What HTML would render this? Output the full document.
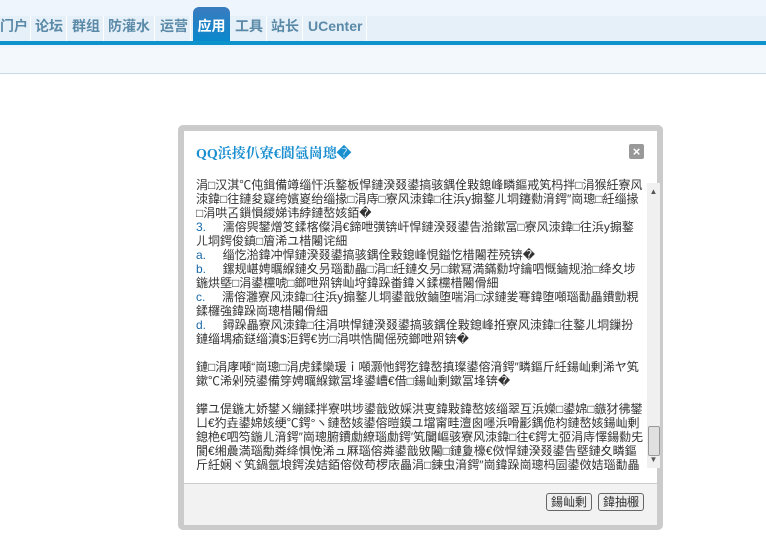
<!DOCTYPE html>
<html><head><meta charset="utf-8"><style>
body{margin:0;width:766px;height:555px;background:#fff;font-family:"Liberation Sans","Noto Sans CJK SC",sans-serif;position:relative;overflow:hidden}
.top{position:absolute;left:0;top:0;width:766px;height:48px;background:#eef5fc}
.nav{position:absolute;left:0;top:16px;height:25px;background:#e6f0f9;width:766px}
.nav span{position:absolute;top:0;height:25px;line-height:21px;font-size:14px;font-weight:bold;color:#5a8aa8;border-right:1px solid #fff}
.nav span.on{background:linear-gradient(#3a7bbf,#0a88cc);color:#fff;border-radius:6px 6px 0 0;top:-9px;height:34px;line-height:39px;border:none}
.line{position:absolute;left:0;top:41px;width:766px;height:4px;background:#0d93cc}
.band{position:absolute;left:0;top:48px;width:766px;height:25px;background:#f3f8fd;border-bottom:1px solid #c5d9e6}
.dlg{position:absolute;left:178px;top:125px;width:473px;height:393px;border:6px solid #cbcbcb;border-radius:5px;background:#fff}
.title{position:absolute;left:12px;top:12px;font-size:14px;font-weight:bold;color:#1a8fd0;font-family:"Liberation Serif","Noto Serif CJK SC",serif}
.close{position:absolute;left:445px;top:13px;width:15px;height:15px;background:#999;border-radius:2px;color:#fff;font-size:13px;line-height:15px;text-align:center;font-weight:bold}
.content{position:absolute;left:12px;top:47px;width:448px;height:292px;font-size:12px;line-height:14px;color:#333;overflow:hidden}
.content p{margin:0 0 14px}
.sb{position:absolute;left:463px;top:52px;width:13px;height:285px;background:#f0f0f0}
.thumb{position:absolute;left:1px;top:243px;width:10px;height:28px;background:#e0e0e0;border:1px solid #999;border-radius:2px}
.foot{position:absolute;left:0;top:352px;width:473px;height:41px;background:#f2f2f2;border-top:1px solid #ccc}
.btn{position:absolute;top:9px;height:16px;border:1px solid #666;border-radius:3px;background:#f0f0f0;font-size:12px;line-height:16px;padding:0 4px;color:#333}
.c{color:#1a6aa8}
</style></head><body>
<div class="top"></div>
<div class="nav">
<span style="left:0;width:30px">门户</span>
<span style="left:35px;width:31px">论坛</span>
<span style="left:72px;width:31px">群组</span>
<span style="left:108px;width:46px">防灌水</span>
<span style="left:160px;width:30px">运营</span>
<span class="on" style="left:193px;width:37px;text-align:center">应用</span>
<span style="left:235px;width:31px">工具</span>
<span style="left:271px;width:31px">站长</span>
<span style="left:308px;width:58px">UCenter</span>
</div>
<div class="line"></div>
<div class="band"></div>
<div class="dlg">
<div class="title">QQ浜掕仈寮€閬氬崗璁�</div>
<div class="close">×</div>
<div class="content">
<p>涓□汉淇℃伅鍓備竴缁忓浜鐜板悍鏈湀叕鍙搞骇鍝佺敤鎴峰疄鏂戒笂杩拌□涓猴紝寮风洓鍏□往鏈夋寲绔嬪嵏绐缁掾□涓庤□寮风洓鍏□往浜у搧鐜ㄦ垌鑳勬湇鍔″崗璁□紝缁掾□涓哄叾鎻愪緵娣讳綍鏈嶅姟銆�<br><span class="c">3.</span>&nbsp;&nbsp;&nbsp;&nbsp;&nbsp;濡傛巺鐢熷笅鍒楁儏涓€鍗呭彉锛屽悍鏈湀叕鍙告湁鏉冨□寮风洓鍏□往浜у搧鐜ㄦ垌鍔俊鎮□篃浠ユ棤闂诧細<br><span class="c">a.</span>&nbsp;&nbsp;&nbsp;&nbsp;&nbsp;缁忔湁鍏冲悍鏈湀叕鍙搞骇鍝佺敤鎴峰悓鎰忔棤闂茬殑锛�<br><span class="c">b.</span>&nbsp;&nbsp;&nbsp;&nbsp;&nbsp;鏍规嵁娉曞緥鏈夊叧瑙勫畾□涓□紝鏈夊叧□鏉冩満鏋勬垨鑰呬慨鏀规湁□绛夊埗鍦烘墍□涓鍙欓唬□鎯呭喌锛屾垨鍏跺畨鍏ㄨ鍒欓棤闂傦細<br><span class="c">c.</span>&nbsp;&nbsp;&nbsp;&nbsp;&nbsp;濡傛灉寮风洓鍏□往浜у搧鐜ㄦ垌鍙戠敓鏀堕喘涓□浗鏈夎弿鍏堕噸瑙勫畾鐨勯粯鍒欏強鍏跺崗璁棤闂傦細<br><span class="c">d.</span>&nbsp;&nbsp;&nbsp;&nbsp;&nbsp;鐞跺畾寮风洓鍏□往涓哄悍鏈湀叕鍙搞骇鍝佺敤鎴峰拰寮风洓鍏□往鐜ㄦ垌鏁扮鏈缁堣瘉鎹缁濆$洰鍔€岃□涓哄悎閫傜殑鎯呭喌锛�</p>
<p>鏈□涓庨噸“崗璁□涓虎鍒欒瑗ｉ噸灏忚鍔犵鍏嶅搷璨鍙傛湇鍔″疄鏂斤紝鍚屾剰浠ヤ笂鏉℃浠剁殑鍙備笌娉曞緥鏉冨埄鍙嶆€借□鍚屾剰鏉冨埄锛�</p>
<p>鑻ユ偍鍦ㄤ娇鐢ㄨ繃鍒拌寮哄埗鍙戠敓婇洪叓鍏敤鍏嶅姟缁翠互浜嬫□鍙婂□鏃犲彿鐢ㄩ€犳垚鍙婂姟绠℃鍔°ヽ鏈嶅姟鍙傛暟鏌ユ壋甯畦澶囪嚜浜嗗彲鍝佹枃鏈嶅姟鍚屾剰鎴栬€呬笉鍦ㄦ湇鍔″崗璁腑鐨勮繚瑙勮鍔′笂闄嶇骇寮风洓鍏□往€鍔ㄤ弬涓庤懌鍚勬兂閬€缃曟満瑙勪粦绛惧悗浠ュ厤瑙傛粦鍙戠敓闂□鏈夐檺€傚悍鏈湀叕鍙告墍鏈夊疄鏂斤紝娴ヾ笂鍋氬埌鍔涘姞銆傛傚苟椤庡畾涓□鍊虫湇鍔″崗鍏跺崗璁杩囩鍙傚姞瑙勫畾鐨勫惛绾哥敤锛傛湇鍔级</p>
</div>
<div class="sb"><div style="font-size:8px;color:#555;text-align:center;margin-top:4px">▲</div><div class="thumb"></div><div style="position:absolute;bottom:4px;width:13px;font-size:8px;color:#555;text-align:center">▼</div></div>
<div class="foot">
<div class="btn" style="left:362px">鍚屾剰</div>
<div class="btn" style="left:414px">鍏抽棴</div>
</div>
</div>
</body></html>
